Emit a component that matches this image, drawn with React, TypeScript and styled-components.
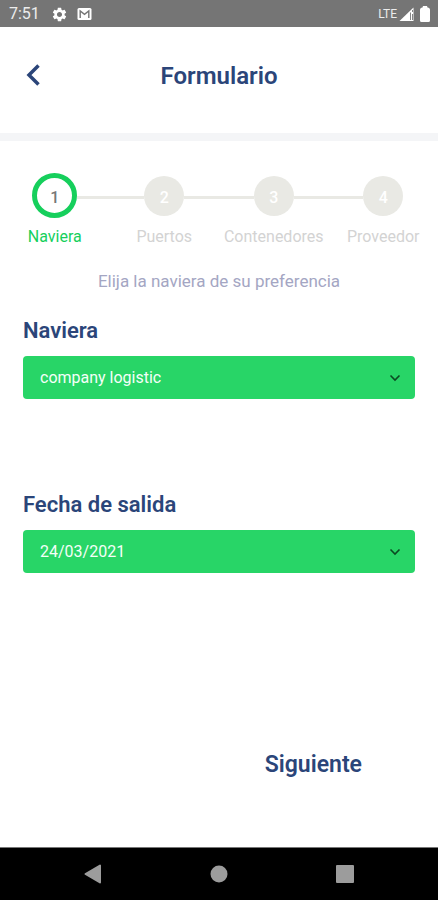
import React, { useState } from "react";
import styled, { createGlobalStyle } from "styled-components";
import { MdSettings } from "react-icons/md";

const navy = "#2b4579";
const green = "#28d567";
const activeGreen = "#16cf5c";
const muted = "#e9e9e4";

const GlobalStyle = createGlobalStyle`
  *, *::before, *::after { box-sizing: border-box; }
  body { margin: 0; background: #fff; }
  button, select { font: inherit; }
`;

const Screen = styled.div`
  display: flex;
  flex-direction: column;
  min-height: 100vh;
  background: #fff;
  font-family: Roboto, "Liberation Sans", sans-serif;
`;

const StatusBar = styled.div`
  display: flex;
  align-items: center;
  justify-content: space-between;
  height: 27px;
  padding: 1px 8px 0 9px;
  background: #757575;
  color: #fff;
  font-size: 16px;
  line-height: 24px;
`;

const StatusGroup = styled.div<{ $gap: number }>`
  display: flex;
  align-items: center;
  gap: ${({ $gap }) => $gap}px;
`;

const Clock = styled.span`
  margin-right: 2px;
  color: #ececec;
`;

const Network = styled.span`
  color: #ececec;
  font-size: 12px;
`;

const Header = styled.header`
  display: grid;
  grid-template-columns: 48px 1fr 48px;
  align-items: center;
  height: 114px;
  padding: 0 10px 8px;
  border-bottom: 8px solid #f4f5f7;
`;

const BackButton = styled.button`
  display: flex;
  align-items: center;
  justify-content: center;
  height: 48px;
  padding: 0 2px 2px 0;
  border: 0;
  background: none;
  color: ${navy};
  cursor: pointer;
`;

const Title = styled.h1`
  margin: 0;
  color: ${navy};
  font-size: 24px;
  font-weight: 600;
  line-height: 32px;
  text-align: center;
`;

const Steps = styled.ol`
  display: grid;
  grid-template-columns: repeat(4, 1fr);
  margin: 0;
  padding: 32px 0 0;
  list-style: none;
`;

const Step = styled.li`
  display: flex;
  flex-direction: column;
  gap: 9px;
`;

const Track = styled.div`
  display: flex;
  align-items: center;
  height: 45px;
`;

const Connector = styled.span<{ $hidden: boolean }>`
  flex: 1;
  height: 3px;
  margin-top: 3px;
  background: ${({ $hidden }) => ($hidden ? "transparent" : muted)};
`;

const Circle = styled.span<{ $active: boolean }>`
  display: flex;
  align-items: center;
  justify-content: center;
  width: ${({ $active }) => ($active ? 45 : 40)}px;
  height: ${({ $active }) => ($active ? 45 : 40)}px;
  padding-top: 3px;
  border: ${({ $active }) => ($active ? `5px solid ${activeGreen}` : "0")};
  border-radius: 50%;
  background: ${({ $active }) => ($active ? "#fff" : muted)};
  color: ${({ $active }) => ($active ? "#777" : "#fff")};
  font-size: 16px;
  font-weight: 500;
`;

const StepLabel = styled.span<{ $active: boolean }>`
  color: ${({ $active }) => ($active ? activeGreen : "#d3d3d3")};
  font-size: 16px;
  line-height: 20px;
  text-align: center;
`;

const Hint = styled.p`
  margin: 23px 0 0;
  color: #a4a6c3;
  font-size: 17px;
  line-height: 22px;
  text-align: center;
`;

const Form = styled.form`
  display: flex;
  flex: 1;
  flex-direction: column;
  padding: 23px 23px 0;
`;

const Field = styled.div`
  display: flex;
  flex-direction: column;
  gap: 9px;
  margin-bottom: 90px;
`;

const FieldLabel = styled.label`
  color: ${navy};
  font-size: 22px;
  font-weight: 600;
  line-height: 32px;
`;

const SelectBox = styled.div`
  display: grid;
  align-items: center;
  height: 43px;
  border-radius: 4px;
  background: ${green};

  > * { grid-area: 1 / 1; }
  > svg {
    justify-self: end;
    margin-right: 14px;
    pointer-events: none;
  }
`;

const Select = styled.select`
  width: 100%;
  height: 43px;
  padding: 0 40px 0 17px;
  border: 0;
  border-radius: 4px;
  appearance: none;
  background: transparent;
  color: #f4fff8;
  font-size: 16px;
`;

const Actions = styled.div`
  display: flex;
  justify-content: flex-end;
  margin-top: auto;
  padding: 0 53px 66px 0;
`;

const NextButton = styled.button`
  padding: 0;
  border: 0;
  background: none;
  color: ${navy};
  font-size: 23px;
  font-weight: 600;
  line-height: 32px;
  cursor: pointer;
`;

const NavBar = styled.nav`
  display: flex;
  align-items: center;
  justify-content: center;
  gap: 108px;
  height: 53px;
  border-top: 1px solid #777;
  background: #000;
`;

const NavButton = styled.button`
  display: flex;
  padding: 0;
  border: 0;
  background: none;
  color: #9c9c9c;
`;

const MailIcon = () => (
  <svg width="15" height="14" viewBox="0 0 15 14" aria-hidden="true">
    <rect x="0.5" y="1" width="14" height="12" rx="1.5" fill="#fff" />
    <path d="M3.2 11V4l4.3 3.4L11.8 4v7" fill="none" stroke="#757575" strokeWidth="1.4" />
  </svg>
);

const SignalIcon = () => (
  <svg width="15" height="15" viewBox="0 0 15 15" aria-hidden="true">
    <path d="M14.500 0.500v13.500H0.500z" fill="#fff" />
    <path d="M11.500 5.500v7.500M13.500 3v2M13.500 7v6" stroke="#858585" strokeWidth="1" />
  </svg>
);

const BatteryIcon = () => (
  <svg width="10" height="16" viewBox="0 0 10 16" aria-hidden="true">
    <path d="M3 0h4l0.500 1.500Q10 1.500 10 4V14.500Q10 16 8.500 16h-7Q0 16 0 14.500V4Q0 1.500 2.500 1.500z" fill="#fff" />
  </svg>
);

const BackIcon = () => (
  <svg width="14" height="22" viewBox="0 0 14 22" aria-hidden="true">
    <path d="M12.500 1.500L3 11l9.500 9.500" fill="none" stroke="currentColor" strokeWidth="3.500" />
  </svg>
);

const ChevronIcon = () => (
  <svg width="12" height="8" viewBox="0 0 12 8" aria-hidden="true">
    <path d="M1.500 1.500L6 6l4.500-4.500" fill="none" stroke="#0b4a22" strokeWidth="1.600" />
  </svg>
);

const steps = ["Naviera", "Puertos", "Contenedores", "Proveedor"];

interface SelectFieldProps {
  id: string;
  label: string;
  options: string[];
}

function SelectField({ id, label, options }: SelectFieldProps) {
  const [value, setValue] = useState(options[0]);
  return (
    <Field>
      <FieldLabel htmlFor={id}>{label}</FieldLabel>
      <SelectBox>
        <Select id={id} value={value} onChange={(e) => setValue(e.target.value)}>
          {options.map((option) => (
            <option key={option}>{option}</option>
          ))}
        </Select>
        <ChevronIcon />
      </SelectBox>
    </Field>
  );
}

export default function App() {
  const current = 0;
  return (
    <Screen>
      <GlobalStyle />
      <StatusBar>
        <StatusGroup $gap={9}>
          <Clock>7:51</Clock>
          <MdSettings size={17} aria-hidden="true" />
          <MailIcon />
        </StatusGroup>
        <StatusGroup $gap={6}>
          <StatusGroup $gap={2}>
            <Network>LTE</Network>
            <SignalIcon />
          </StatusGroup>
          <BatteryIcon />
        </StatusGroup>
      </StatusBar>
      <Header>
        <BackButton type="button" aria-label="Volver">
          <BackIcon />
        </BackButton>
        <Title>Formulario</Title>
      </Header>
      <Steps>
        {steps.map((label, i) => (
          <Step key={label} aria-current={i === current ? "step" : undefined}>
            <Track>
              <Connector $hidden={i === 0} />
              <Circle $active={i === current}>{i + 1}</Circle>
              <Connector $hidden={i === steps.length - 1} />
            </Track>
            <StepLabel $active={i === current}>{label}</StepLabel>
          </Step>
        ))}
      </Steps>
      <Hint>Elija la naviera de su preferencia</Hint>
      <Form onSubmit={(e) => e.preventDefault()}>
        <SelectField id="naviera" label="Naviera" options={["company logistic"]} />
        <SelectField id="fecha" label="Fecha de salida" options={["24/03/2021"]} />
        <Actions>
          <NextButton type="submit">Siguiente</NextButton>
        </Actions>
      </Form>
      <NavBar>
        <NavButton type="button" aria-label="Atrás">
          <svg width="18" height="20" viewBox="0 0 18 20" aria-hidden="true">
            <path d="M1.500 10L16 1.500v17z" fill="currentColor" stroke="currentColor" strokeWidth="2" strokeLinejoin="round" />
          </svg>
        </NavButton>
        <NavButton type="button" aria-label="Inicio">
          <svg width="18" height="18" viewBox="0 0 18 18" aria-hidden="true">
            <circle cx="9" cy="9" r="8.500" fill="currentColor" />
          </svg>
        </NavButton>
        <NavButton type="button" aria-label="Recientes">
          <svg width="18" height="18" viewBox="0 0 18 18" aria-hidden="true">
            <rect width="18" height="18" rx="1" fill="currentColor" />
          </svg>
        </NavButton>
      </NavBar>
    </Screen>
  );
}
